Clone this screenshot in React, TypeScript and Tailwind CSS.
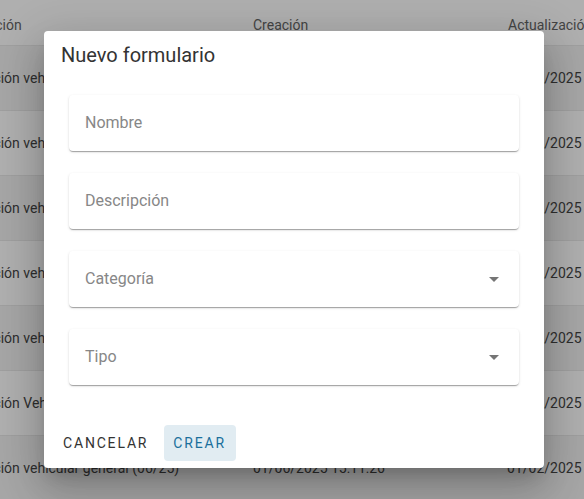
import React from "react";

const rows = [
  { a: "Inspección vehicular general (06/25)", b: "01/06/2025 15:11:26", c: "01/02/2025 15:11:26", dark: true },
  { a: "Inspección vehicular general (05/25)", b: "01/05/2025 15:11:26", c: "01/02/2025 15:11:26", dark: false },
  { a: "Inspección vehicular general (04/25)", b: "01/04/2025 15:11:26", c: "01/02/2025 15:11:26", dark: true },
  { a: "Inspección vehicular general (03/25)", b: "01/03/2025 15:11:26", c: "01/02/2025 15:11:26", dark: false },
  { a: "Inspección vehicular general (02/25)", b: "01/02/2025 15:11:26", c: "01/02/2025 15:11:26", dark: true },
  { a: "Inspección Vehicular general (01/25)", b: "01/01/2025 15:11:26", c: "01/02/2025 15:11:26", dark: false },
  { a: "Inspección vehicular general (06/25)", b: "01/06/2025 15:11:26", c: "01/02/2025 15:11:26", dark: true },
];

function Field({ label, select }: { label: string; select?: boolean }) {
  return (
    <div className="h-[56px] rounded-[4px] bg-white shadow-[0_2px_1px_-1px_rgba(0,0,0,0.2),0_1px_1px_0_rgba(0,0,0,0.14),0_1px_3px_0_rgba(0,0,0,0.12)] flex items-center pl-[16px] pr-[20px]">
      <span className="flex-1 text-[16px] text-[#878787]">{label}</span>
      {select && (
        <svg width="10" height="5" viewBox="0 0 10 5" className="fill-[#757575]">
          <path d="M0 0 L10 0 L5 5 Z" />
        </svg>
      )}
    </div>
  );
}

export default function App() {
  return (
    <div className="relative w-[584px] h-[499px] overflow-hidden bg-[#a6a6a6] font-['Roboto',sans-serif] text-[14px]">
      <div className="flex flex-col">
        <div className="h-[46px] flex items-center pt-[5px] bg-[#afafaf] border-b border-[#9f9f9f] text-[#444]">
          <div className="w-[305px] shrink-0 ml-[-52px] whitespace-nowrap">Descripción</div>
          <div className="w-[255px] shrink-0 whitespace-nowrap">Creación</div>
          <div className="shrink-0 whitespace-nowrap">Actualización</div>
        </div>
        {rows.map((r, i) => (
          <div
            key={i}
            className={`h-[65px] flex items-center border-b border-[#9f9f9f] text-[#2e2e2e] ${r.dark ? "bg-[#a6a6a6]" : "bg-[#afafaf]"}`}
          >
            <div className="w-[301px] shrink-0 ml-[-48px] whitespace-nowrap">{r.a}</div>
            <div className="w-[254px] shrink-0 whitespace-nowrap">{r.b}</div>
            <div className="shrink-0 whitespace-nowrap">{r.c}</div>
          </div>
        ))}
      </div>

      <div className="absolute left-[44px] top-[31px] w-[500px] h-[437px] bg-white rounded-[4px] shadow-[0_11px_15px_-7px_rgba(0,0,0,0.2),0_24px_38px_3px_rgba(0,0,0,0.14),0_9px_46px_8px_rgba(0,0,0,0.12)] flex flex-col">
        <div className="pt-[10px] px-[17px] h-[64px] text-[20px] leading-[28px] text-[#333]">Nuevo formulario</div>
        <div className="flex flex-col gap-[22px] px-[25px]">
          <Field label="Nombre" />
          <Field label="Descripción" />
          <Field label="Categoría" select />
          <Field label="Tipo" select />
        </div>
        <div className="flex-1" />
        <div className="flex items-center gap-[8px] pl-[11px] pb-[7px]">
          <button className="h-[36px] px-[8px] text-[14px] tracking-[0.13em] text-[#333] rounded-[4px]">CANCELAR</button>
          <button className="h-[36px] pl-[9px] pr-[10px] text-[14px] tracking-[0.13em] text-[#1a6f9c] bg-[#e1ecf2] rounded-[4px]">CREAR</button>
        </div>
      </div>
    </div>
  );
}
